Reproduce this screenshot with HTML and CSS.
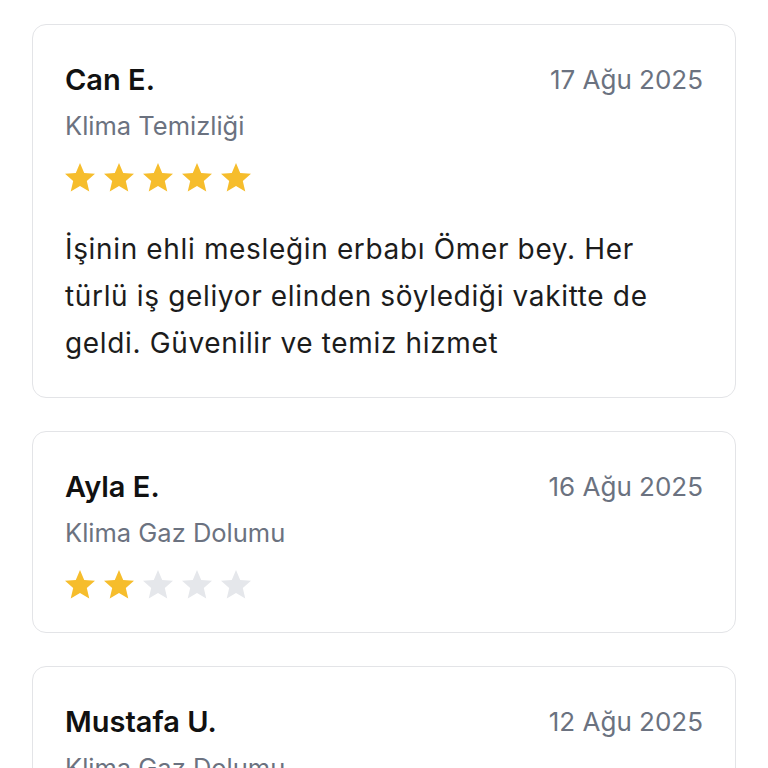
FILE: index.html
```html
<!DOCTYPE html>
<html lang="tr">
<head>
    <meta charset="UTF-8">
    <meta name="viewport" content="width=device-width, initial-scale=1.0">
    <title>Yorumlar</title>
    <link rel="stylesheet" href="styles.css">
</head>
<body>

<svg width="0" height="0" class="defs">
    <defs>
        <symbol id="star" viewBox="2 2 20 20">
            <path d="M12 17.27L18.18 21l-1.64-7.03L22 9.24l-7.19-.61L12 2 9.19 8.63 2 9.24l5.46 4.73L5.82 21z"/>
        </symbol>
    </defs>
</svg>

<div class="list">
    <div class="review">
        <div class="head">
            <div class="who">
                <div class="name">Can E.</div>
                <div class="service">Klima Temizliği</div>
            </div>
            <div class="date">17 Ağu 2025</div>
        </div>
        <div class="stars">
            <svg class="star on"><use href="#star"/></svg>
            <svg class="star on"><use href="#star"/></svg>
            <svg class="star on"><use href="#star"/></svg>
            <svg class="star on"><use href="#star"/></svg>
            <svg class="star on"><use href="#star"/></svg>
        </div>
        <p class="text">İşinin ehli mesleğin erbabı Ömer bey. Her türlü iş geliyor elinden söylediği vakitte de geldi. Güvenilir ve temiz hizmet</p>
    </div>

    <div class="review">
        <div class="head">
            <div class="who">
                <div class="name">Ayla E.</div>
                <div class="service">Klima Gaz Dolumu</div>
            </div>
            <div class="date">16 Ağu 2025</div>
        </div>
        <div class="stars">
            <svg class="star on"><use href="#star"/></svg>
            <svg class="star on"><use href="#star"/></svg>
            <svg class="star"><use href="#star"/></svg>
            <svg class="star"><use href="#star"/></svg>
            <svg class="star"><use href="#star"/></svg>
        </div>
    </div>

    <div class="review">
        <div class="head">
            <div class="who">
                <div class="name">Mustafa U.</div>
                <div class="service">Klima Gaz Dolumu</div>
            </div>
            <div class="date">12 Ağu 2025</div>
        </div>
        <div class="stars">
            <svg class="star on"><use href="#star"/></svg>
            <svg class="star on"><use href="#star"/></svg>
            <svg class="star on"><use href="#star"/></svg>
            <svg class="star on"><use href="#star"/></svg>
            <svg class="star"><use href="#star"/></svg>
        </div>
    </div>
</div>

</body>
</html>
```

FILE: styles.css
```css
body {
    margin: 0;
    padding: 0;
    background: #fff;
    font-family: Inter, "Noto Sans", sans-serif;
    color: #111;
}

.defs {
    position: absolute;
}

.list {
    display: flex;
    flex-direction: column;
    gap: 33px;
    padding: 24px 32px;
}

.review {
    border: 1px solid #e3e4e7;
    border-radius: 14px;
    padding: 38px 32px 32px;
}

.head {
    display: flex;
    justify-content: space-between;
    align-items: flex-start;
}

.name {
    font-size: 29px;
    font-weight: 600;
    line-height: 34px;
    color: #111;
}

.service {
    margin-top: 13px;
    font-size: 25.5px;
    line-height: 32px;
    color: #6b7280;
}

.date {
    font-size: 26px;
    line-height: 34px;
    color: #6b7280;
}

.stars {
    display: flex;
    gap: 9px;
    margin-top: 21px;
}

.star {
    width: 30px;
    height: 30px;
    fill: #e5e7eb;
}

.star.on {
    fill: #f6bd2c;
}

.text {
    margin: 33px 0 -2px;
    font-size: 28px;
    line-height: 47px;
    letter-spacing: 0.65px;
    color: #1c1c1c;
}
```
